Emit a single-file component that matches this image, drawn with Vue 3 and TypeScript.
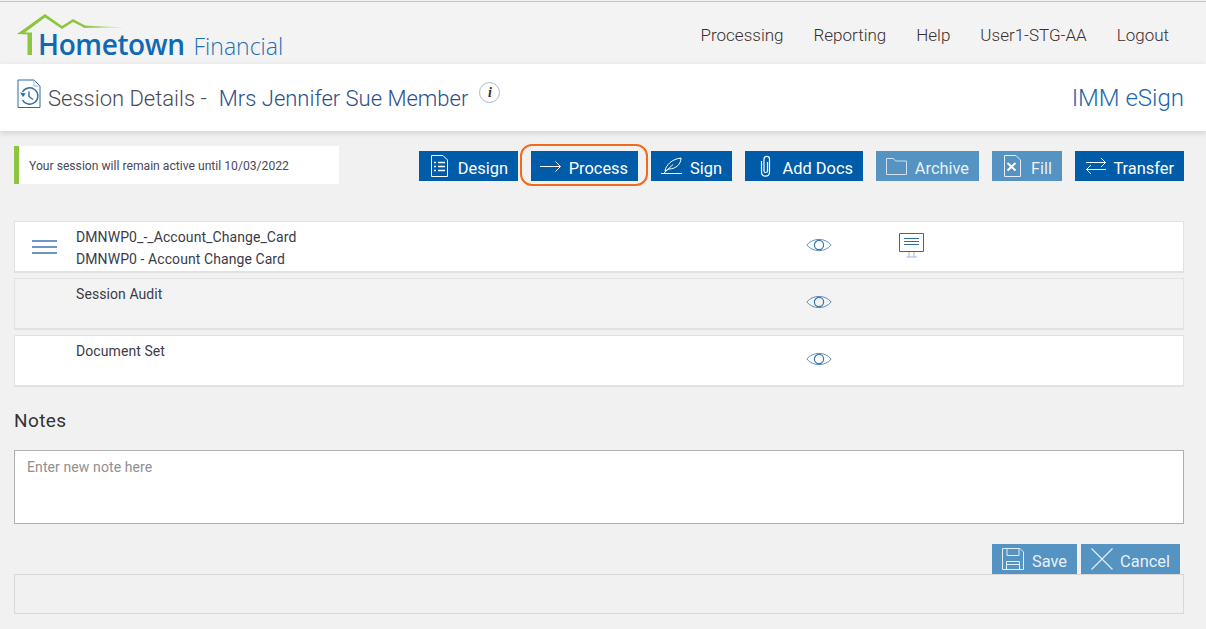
<script setup lang="ts">
interface Row { lines: string[]; menu: boolean; monitor: boolean; shaded: boolean }
const nav: string[] = ['Processing', 'Reporting', 'Help', 'User1-STG-AA', 'Logout']
const rows: Row[] = [
  { lines: ['DMNWP0_-_Account_Change_Card', 'DMNWP0 - Account Change Card'], menu: true, monitor: true, shaded: false },
  { lines: ['Session Audit'], menu: false, monitor: false, shaded: true },
  { lines: ['Document Set'], menu: false, monitor: false, shaded: false },
]
</script>

<template>
  <div class="page">
    <header class="top">
      <div class="logo">
        <svg class="house" width="112" height="46" viewBox="0 0 112 46" fill="none">
          <defs>
            <linearGradient id="fade" x1="66" y1="0" x2="110" y2="0" gradientUnits="userSpaceOnUse">
              <stop offset="0" stop-color="#8cc63f" />
              <stop offset="1" stop-color="#8cc63f" stop-opacity="0.15" />
            </linearGradient>
          </defs>
          <path d="M66 11.500 69 12.500 110 14.500 69 15 66 13.500Z" fill="url(#fade)" />
          <path d="M1 21 29 1 46 13 57 6 69 12.500V15L57 9 46 16 29 4.500 9 19.500H16V42H11.500V21.500Z" fill="#8cc63f" />
        </svg>
        <span class="brand">Hometown</span>
        <span class="sub">Financial</span>
      </div>
      <nav class="nav">
        <span v-for="item in nav" :key="item">{{ item }}</span>
      </nav>
    </header>

    <section class="titlebar">
      <svg class="doc" width="24" height="30" viewBox="0 0 24 30" fill="none" stroke="#2f6ca6" stroke-width="1">
        <path d="M1 1H17L23 7V28.500H1Z" />
        <path d="M17 1V7H23" stroke="#9db9d3" />
        <path d="M5.500 13A8.200 8.200 0 1 1 5.500 21" stroke-width="1.400" />
        <path d="M3 13.500 6 18 8.800 14.500Z" fill="#2f6ca6" stroke="none" />
        <path d="M12 12.500V17.500L16 20.500" stroke-width="1.400" />
      </svg>
      <h1 class="title">Session Details -</h1>
      <span class="member">Mrs Jennifer Sue Member</span>
      <span class="info"><i>i</i></span>
      <span class="app">IMM eSign</span>
    </section>

    <section class="actions">
      <div class="notice">Your session will remain active until 10/03/2022</div>
      <div class="buttons">
        <button class="btn b-design">
          <svg width="17" height="22" viewBox="0 0 17 22" fill="none" stroke="#fff"><path d="M.5.5H12L16.500 5V21.500H.5Z" /><path d="M3 7.500H5M7 7.500H14M3 11.500H5M7 11.500H14M3 15.500H5M7 15.500H14" stroke-width="1.300" /></svg>
          <span class="label">Design</span>
        </button>
        <button class="btn b-process">
          <svg width="21" height="11" viewBox="0 0 21 11" fill="none" stroke="#fff"><path d="M0 5.500H20M15.500 .5 20.500 5.500 15.500 10.500" /></svg>
          <span class="label">Process</span>
        </button>
        <button class="btn b-sign">
          <svg width="21" height="18" viewBox="0 0 21 18" fill="none" stroke="#fff"><path d="M0 16.500H21" /><path d="M4 14C5 8 11 2 20 1 20 7 15 12 8 12Z" /><path d="M3 16 12 7.500" /></svg>
          <span class="label">Sign</span>
        </button>
        <button class="btn b-docs">
          <svg width="11" height="22" viewBox="0 0 11 22" fill="none" stroke="#fff" stroke-width="1.200"><path d="M7.500 7V16C7.500 18 4 18 4 16V4C4 .5 9.500 .5 9.500 4V17C9.500 22.500 1.500 22.500 1.500 17V6" /></svg>
          <span class="label">Add Docs</span>
        </button>
        <button class="btn light b-archive">
          <svg width="21" height="17" viewBox="0 0 21 17" fill="none" stroke="#cfe0ee"><path d="M.5 16.500V.5H7.500L9.500 3H20.500V16.500Z" /></svg>
          <span class="label">Archive</span>
        </button>
        <button class="btn light b-fill">
          <svg width="17" height="22" viewBox="0 0 17 22" fill="none" stroke="#e3edf5"><path d="M.5.5H12L16.500 5V21.500H.5Z" /><path d="M3.500 8 11.500 15.500M11.500 8 3.500 15.500" stroke="#fff" stroke-width="2" /></svg>
          <span class="label">Fill</span>
        </button>
        <button class="btn b-transfer">
          <svg width="22" height="18" viewBox="0 0 22 18" fill="none" stroke="#fff"><path d="M1 5.500H20.500M16 1 20.500 5.500 16 10M21 12.500H1.500M6 8 1.500 12.500 6 17" /></svg>
          <span class="label">Transfer</span>
        </button>
      </div>
    </section>

    <section class="rows">
      <div v-for="row in rows" :key="row.lines[0]" class="row" :class="{ shaded: row.shaded }">
        <div class="menu-cell">
          <svg v-if="row.menu" width="25" height="14" viewBox="0 0 25 14" stroke="#3c75ad" stroke-width="1.300"><path d="M0 1H25M0 7H25M0 13H25" /></svg>
        </div>
        <div class="names">
          <div v-for="line in row.lines" :key="line">{{ line }}</div>
        </div>
        <svg class="eye" width="26" height="16" viewBox="0 0 26 16" fill="none" stroke="#3c75ad">
          <path d="M.8 8C7 .5 19 .5 25.200 8 19 15.500 7 15.500.8 8Z" stroke-width=".8" />
          <circle cx="13" cy="8" r="4.600" stroke-width="1.200" />
        </svg>
        <svg v-if="row.monitor" class="monitor" width="25" height="25" viewBox="0 0 25 25" fill="none" stroke="#2f6ca6">
          <path d="M.5.5H24.500V18.500H.5Z" />
          <path d="M5 5.500H20M5 8.500H20M5 11.500H20" stroke-width="1.200" />
          <path d="M10 19V24M15 19V24M7.500 24H18" stroke="#9db9d3" />
        </svg>
      </div>
    </section>

    <h2 class="notes-title">Notes</h2>
    <div class="note-box">Enter new note here</div>

    <div class="form-buttons">
      <button class="btn light b-save">
        <svg width="22" height="22" viewBox="0 0 22 22" fill="none" stroke="#e3edf5"><path d="M.5.5H18L21.500 4V21.500H.5Z" /><path d="M5 .5V7.500H17V.5M4.500 21.500V13.500H17.500V21.500M4.500 16.500H17.500" /></svg>
        <span class="label">Save</span>
      </button>
      <button class="btn light b-cancel">
        <svg width="22" height="22" viewBox="0 0 22 22" fill="none" stroke="#e3edf5" stroke-width="1.200"><path d="M.5.500 21.500 21.500M21.500.500 .5 21.500" /></svg>
        <span class="label">Cancel</span>
      </button>
    </div>
    <div class="footer-box"></div>
  </div>
</template>

<style scoped>
.page {
  width: 1206px;
  height: 629px;
  overflow: hidden;
  background: #f1f1f1;
  font-family: Roboto, "Liberation Sans", sans-serif;
  color: #3d3d4a;
}
.top {
  height: 62px;
  margin-top: 1px;
  border-top: 1px solid #c4c4c4;
  background: #f3f3f3;
  display: flex;
  justify-content: space-between;
  padding: 0 37px 0 16px;
  box-sizing: content-box;
}
.logo {
  position: relative;
  flex: none;
  width: 270px;
  display: flex;
  align-items: baseline;
  padding: 24px 0 0 22px;
  box-sizing: border-box;
  white-space: nowrap;
}
.house {
  position: absolute;
  left: 0;
  top: 11px;
}
.brand {
  font-family: "Open Sans", sans-serif;
  font-weight: 600;
  font-size: 28px;
  letter-spacing: -0.4px;
  color: #0f69b4;
  line-height: 36px;
}
.sub {
  font-family: "Open Sans", sans-serif;
  font-weight: 300;
  font-size: 23px;
  color: #1f70b5;
  margin-left: 9px;
}
.nav {
  display: flex;
  gap: 30px;
  padding-top: 23px;
  font-size: 17px;
  font-weight: 300;
  line-height: 20px;
  color: #3a3030;
}
.titlebar {
  height: 67px;
  background: #fff;
  box-shadow: 0 2px 6px rgba(0, 0, 0, 0.14);
  display: flex;
  align-items: flex-start;
  padding: 15px 22px 0 17px;
  box-sizing: border-box;
  position: relative;
}
.doc { flex: none; margin-right: 7px; }
.title {
  margin: 0;
  font-size: 22px;
  font-weight: 300;
  line-height: 40px;
  color: #4a4a55;
}
.member {
  margin-left: 12px;
  font-size: 22px;
  font-weight: 300;
  line-height: 40px;
  color: #2b4f8c;
}
.info {
  width: 19px;
  height: 19px;
  margin: 3px 0 0 11px;
  border: 1px solid #9dbbd6;
  border-radius: 50%;
  display: flex;
  align-items: center;
  justify-content: center;
  font-family: "Liberation Serif", serif;
  font-weight: 700;
  font-size: 14px;
  color: #333;
}
.app {
  margin-left: auto;
  font-size: 24px;
  font-weight: 300;
  line-height: 38px;
  color: #1a66ab;
}
.actions {
  display: flex;
  justify-content: space-between;
  align-items: flex-start;
  padding: 15px 22px 0 14px;
  height: 90px;
  box-sizing: border-box;
}
.notice {
  width: 325px;
  height: 38px;
  background: #fff;
  border-left: 5px solid #8cc63f;
  box-sizing: border-box;
  padding-left: 10px;
  font-size: 12.150px;
  font-weight: 400;
  line-height: 40px;
  color: #4a4a58;
}
.buttons {
  display: flex;
  gap: 13px;
  margin-top: 5px;
}
.btn {
  height: 30px;
  border: 0;
  padding: 0 10px 0 12px;
  margin: 0;
  background: #005ca8;
  color: #fff;
  font-family: Roboto, "Liberation Sans", sans-serif;
  font-size: 16.400px;
  font-weight: 400;
  display: flex;
  align-items: center;
  justify-content: space-between;
  box-sizing: border-box;
  position: relative;
  white-space: nowrap;
}
.label { margin-top: 6px; line-height: 20px; }
.btn svg { flex: none; }
.btn.light { background: #5593c3; color: #e8f0f6; }
.b-design { width: 99px; }
.b-process { width: 107px; padding-left: 9px; }
.b-process::after {
  content: "";
  position: absolute;
  left: -11px;
  top: -7px;
  width: 128px;
  height: 42px;
  border: 2px solid #f26a1b;
  border-radius: 12px;
  box-sizing: border-box;
}
.b-sign { width: 81px; padding-left: 10px; }
.b-docs { width: 118px; padding-left: 15px; }
.b-archive { width: 103px; padding-left: 10px; }
.b-fill { width: 70px; }
.b-transfer { width: 109px; padding-left: 10px; }
.rows {
  display: flex;
  flex-direction: column;
  gap: 5px;
  padding: 0 22px 0 14px;
}
.row {
  height: 52px;
  border: 1px solid #e2e2e2;
  border-bottom-width: 2px;
  background: #fff;
  box-sizing: border-box;
  display: grid;
  grid-template-columns: 61px 730px 93px 25px;
  align-items: center;
  font-size: 14px;
  letter-spacing: 0.08px;
  line-height: 22px;
  color: #3b3b48;
}
.row.shaded { background: #f3f3f3; }
.menu-cell {
  display: flex;
  padding-left: 17px;
}
.names {
  align-self: start;
  padding-top: 4px;
}
.eye { margin-top: -3px; }
.monitor { margin-top: -2px; }
.notes-title {
  margin: 0;
  padding: 22px 0 0 14px;
  font-size: 19px;
  font-weight: 400;
  letter-spacing: 0.4px;
  line-height: 24px;
  color: #333;
}
.note-box {
  margin: 17px 22px 0 14px;
  height: 74px;
  background: #fff;
  border: 1px solid #b0b0b0;
  box-sizing: border-box;
  padding: 8px 12px;
  font-size: 14px;
  font-weight: 400;
  letter-spacing: 0.1px;
  line-height: 17px;
  color: #909090;
}
.form-buttons {
  display: flex;
  justify-content: flex-end;
  gap: 4px;
  margin: 20px 26px 0 0;
}
.b-save { width: 85px; padding: 0 10px; }
.b-cancel { width: 99px; padding: 0 10px 0 10px; }
.footer-box {
  margin: 0 22px 0 14px;
  height: 40px;
  background: #f1f1f1;
  border: 1px solid #d8d8d8;
  box-sizing: border-box;
}
</style>
